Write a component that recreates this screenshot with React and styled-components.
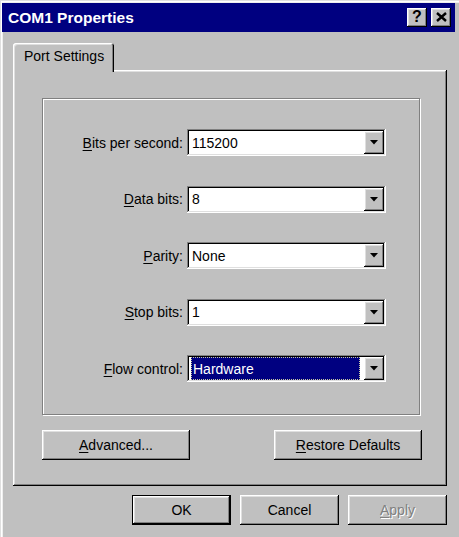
import React from 'react'
import styled, { createGlobalStyle } from 'styled-components'

const GlobalStyle = createGlobalStyle`
  html, body {
    margin: 0;
    padding: 0;
    background: #c0c0c0;
  }
  body {
    font-family: "Liberation Sans", Arial, sans-serif;
    font-size: 14px;
    color: #000;
  }
`

const raised = `
  box-shadow: inset -1px -1px #000, inset 1px 1px #fff,
    inset -2px -2px #808080, inset 2px 2px #dfdfdf;
`

const Window = styled.div`
  box-sizing: border-box;
  width: 459px;
  height: 537px;
  padding: 3px 4px 0 2px;
  background: #c0c0c0;
  box-shadow: inset 1px 1px #dfdfdf, inset 2px 2px #fff, inset 3px 3px #eeeeee;
  display: flex;
  flex-direction: column;
`

const TitleBar = styled.div`
  height: 29px;
  background: #000080;
  display: flex;
  align-items: center;
  justify-content: space-between;
  padding: 0 4px 0 6px;
`

const Title = styled.span`
  color: #fff;
  font-weight: bold;
  font-size: 15.5px;
`

const TitleButtons = styled.div`
  display: flex;
  gap: 4px;
`

const TitleButton = styled.div`
  box-sizing: border-box;
  width: 20px;
  height: 19px;
  background: #c0c0c0;
  ${raised}
  display: flex;
  align-items: center;
  justify-content: center;
  font-weight: bold;
  font-size: 16px;
  line-height: 1;
  padding-bottom: 1px;
`

const Body = styled.div`
  padding: 11px 8px 0 11px;
  display: flex;
  flex-direction: column;
`

const TabStrip = styled.div`
  display: flex;
  position: relative;
  z-index: 1;
  margin-bottom: -2px;
`

const Tab = styled.div`
  box-sizing: border-box;
  height: 29px;
  width: 101px;
  padding: 5px 0 0 11px;
  background: #c0c0c0;
  border-radius: 3px 3px 0 0;
  box-shadow: inset 1px 1px #fff, inset -1px 0 #000, inset -2px 0 #808080, inset 2px 2px #dfdfdf;
`

const Panel = styled.div`
  box-sizing: border-box;
  height: 416px;
  padding: 28px 27px 0 29px;
  ${raised}
  display: flex;
  flex-direction: column;
`

const GroupBox = styled.div`
  box-sizing: border-box;
  height: 317px;
  width: 378px;
  border: 1px solid #808080;
  box-shadow: inset 1px 1px #fff, 1px 1px #fff;
  padding-top: 30px;
  display: grid;
  grid-template-columns: 140px 199px;
  grid-auto-rows: 27px;
  row-gap: 29.5px;
  column-gap: 4px;
  align-items: center;
`

const Label = styled.label`
  justify-self: end;
  white-space: nowrap;
`

const Key = styled.span`
  text-decoration: underline;
  text-underline-offset: 2px;
`

const Combo = styled.div`
  box-sizing: border-box;
  height: 27px;
  background: #fff;
  padding: 2px 2px 2px 4px;
  box-shadow: inset -1px -1px #fff, inset 1px 1px #808080,
    inset -2px -2px #dfdfdf, inset 2px 2px #000;
  display: flex;
  align-items: center;
`

const Value = styled.span`
  flex: 1;
  align-self: stretch;
  display: flex;
  align-items: center;
  margin-right: 4px;
  padding-left: ${p => (p.$selected ? '2px' : '1px')};
  background: ${p => (p.$selected ? '#000080' : 'transparent')};
  color: ${p => (p.$selected ? '#fff' : '#000')};
  outline: ${p => (p.$selected ? '1px dotted #c8c8a0' : 'none')};
  outline-offset: -1px;
`

const ArrowButton = styled.div`
  box-sizing: border-box;
  width: 20px;
  height: 23px;
  background: #c0c0c0;
  ${raised}
  display: flex;
  align-items: center;
  justify-content: center;
`

const Row = styled.div`
  display: flex;
  justify-content: ${p => p.$justify || 'flex-start'};
  gap: ${p => p.$gap || '0px'};
  margin-top: ${p => p.$top || '0px'};
`

const GroupButtons = styled(Row)`
  width: 380px;
`

const Button = styled.button`
  box-sizing: border-box;
  width: ${p => p.$width || '99px'};
  height: 30px;
  padding: 0 0 1px;
  margin: 0;
  font-family: inherit;
  font-size: 14px;
  background: #c0c0c0;
  color: ${p => (p.disabled ? '#808080' : '#000')};
  text-shadow: ${p => (p.disabled ? '1px 1px #fff' : 'none')};
  border: ${p => (p.$default ? '1px solid #000' : 'none')};
  ${raised}
`

const Arrow = () => (
  <svg width="8" height="5" viewBox="0 0 8 5">
    <path d="M0 0H8L4 4.5Z" fill="#000" />
  </svg>
)

const CloseGlyph = () => (
  <svg width="11" height="10" viewBox="0 0 11 10">
    <path d="M1 1L10 9M10 1L1 9" stroke="#000" strokeWidth="2.4" />
  </svg>
)

const fields = [
  { key: 'B', rest: 'its per second:', value: '115200' },
  { key: 'D', rest: 'ata bits:', value: '8' },
  { key: 'P', rest: 'arity:', value: 'None' },
  { key: 'S', rest: 'top bits:', value: '1' },
  { key: 'F', rest: 'low control:', value: 'Hardware', selected: true }
]

const App = () => {
  return (
    <>
      <GlobalStyle />
      <Window>
        <TitleBar>
          <Title>COM1 Properties</Title>
          <TitleButtons>
            <TitleButton>?</TitleButton>
            <TitleButton><CloseGlyph /></TitleButton>
          </TitleButtons>
        </TitleBar>
        <Body>
          <TabStrip>
            <Tab>Port Settings</Tab>
          </TabStrip>
          <Panel>
            <GroupBox>
              {fields.map(f => (
                <React.Fragment key={f.key}>
                  <Label><Key>{f.key}</Key>{f.rest}</Label>
                  <Combo>
                    <Value $selected={f.selected}>{f.value}</Value>
                    <ArrowButton><Arrow /></ArrowButton>
                  </Combo>
                </React.Fragment>
              ))}
            </GroupBox>
            <GroupButtons $justify="space-between" $top="15px">
              <Button $width="148px"><Key>A</Key>dvanced...</Button>
              <Button $width="148px"><Key>R</Key>estore Defaults</Button>
            </GroupButtons>
          </Panel>
          <Row $justify="flex-end" $gap="9px" $top="9px">
            <Button $default>OK</Button>
            <Button>Cancel</Button>
            <Button disabled><Key>A</Key>pply</Button>
          </Row>
        </Body>
      </Window>
    </>
  )
}

export default App
